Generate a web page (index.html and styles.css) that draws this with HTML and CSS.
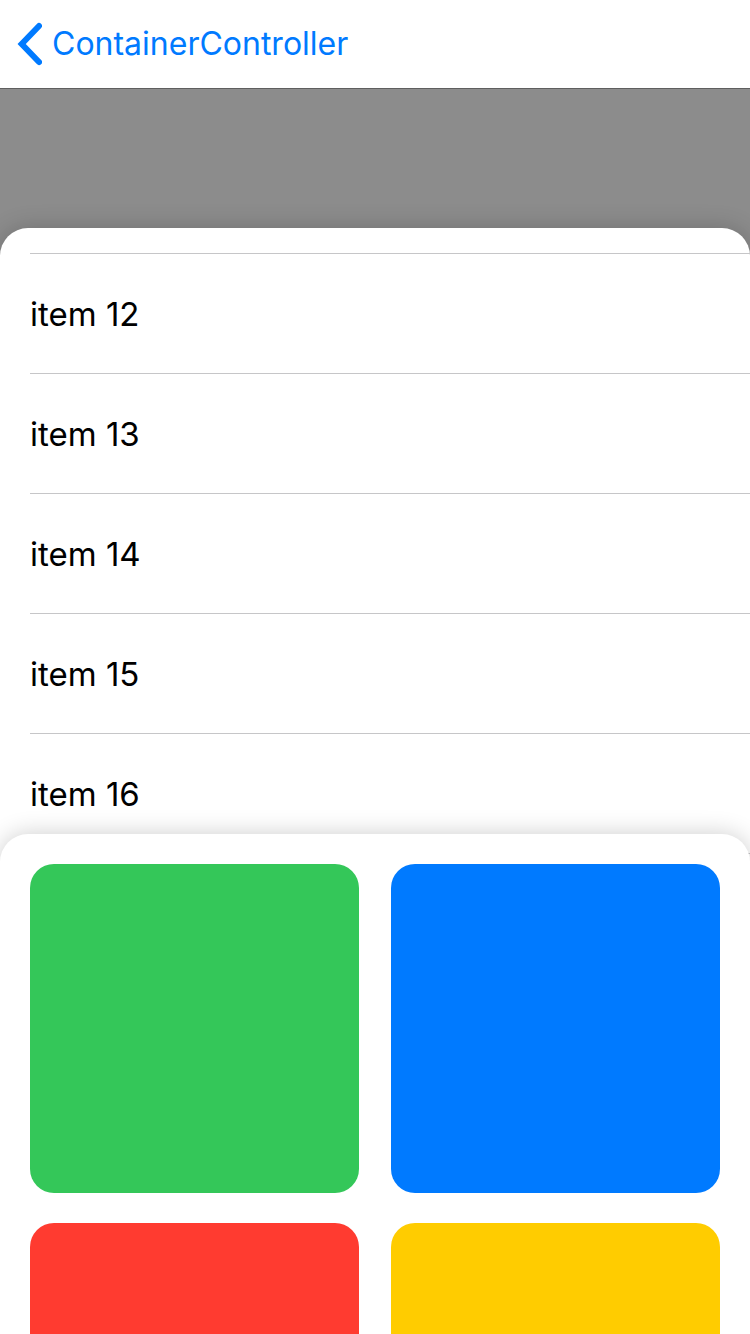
FILE: index.html
```html
<!DOCTYPE html>
<html lang="en">
<head>
<meta charset="utf-8">
<meta name="viewport" content="width=device-width, initial-scale=1">
<title>ContainerController</title>
<link rel="stylesheet" href="styles.css">
</head>
<body>
<div class="screen">
  <header class="navbar">
    <a class="back" href="#">
      <svg class="back-icon" viewBox="0 0 26 44" aria-hidden="true"><path d="M23 4 5.7 22 23 40"/></svg>
      <span>ContainerController</span>
    </a>
  </header>
  <main class="backdrop">
    <section class="sheet">
      <ul class="list">
        <li class="item">item 12</li>
        <li class="item">item 13</li>
        <li class="item">item 14</li>
        <li class="item">item 15</li>
        <li class="item">item 16</li>
      </ul>
    </section>
    <section class="panel">
      <div class="tile green"></div>
      <div class="tile blue"></div>
      <div class="tile red"></div>
      <div class="tile yellow"></div>
    </section>
  </main>
</div>
</body>
</html>
```
FILE: styles.css
```css
* {
  box-sizing: border-box;
}

body {
  margin: 0;
  font-family: Inter, "Liberation Sans", sans-serif;
  font-size: 33px;
  line-height: 40px;
  color: #000;
  background: #fff;
}

.screen {
  display: flex;
  flex-direction: column;
  height: 100vh;
  overflow: hidden;
}

.navbar {
  flex: none;
  display: flex;
  padding: 24px 16px;
  border-bottom: 1px solid #5f5f5f;
}

.back {
  display: flex;
  align-items: center;
  gap: 10px;
  height: 40px;
  color: #007aff;
  font-size: 32px;
  text-decoration: none;
}

.back-icon {
  width: 26px;
  height: 44px;
  fill: none;
  stroke: currentColor;
  stroke-width: 6;
  stroke-linecap: round;
}

.backdrop {
  flex: 1;
  min-height: 0;
  padding-top: 139px;
  background: #8c8c8c;
}

.sheet {
  padding: 25px 0 40px;
  border-radius: 28px 28px 0 0;
  background: #fff;
  box-shadow: 0 0 24px rgba(0, 0, 0, 0.2);
}

.list {
  margin: 0;
  padding: 0 0 0 30px;
  list-style: none;
}

.item {
  height: 120px;
  padding-top: 40px;
  border-top: 1px solid #c6c6c8;
}

.list::after {
  content: "";
  display: block;
  border-top: 1px solid #c6c6c8;
}

.panel {
  position: relative;
  display: grid;
  grid-template-columns: 1fr 1fr;
  gap: 30px 32px;
  margin-top: -60px;
  padding: 30px;
  border-radius: 28px 28px 0 0;
  background: #fff;
  box-shadow: 0 0 24px rgba(0, 0, 0, 0.2);
}

.tile {
  aspect-ratio: 1;
  border-radius: 24px;
}

.green {
  background: #34c759;
}

.blue {
  background: #007aff;
}

.red {
  background: #ff3b30;
}

.yellow {
  background: #ffcc00;
}
```
